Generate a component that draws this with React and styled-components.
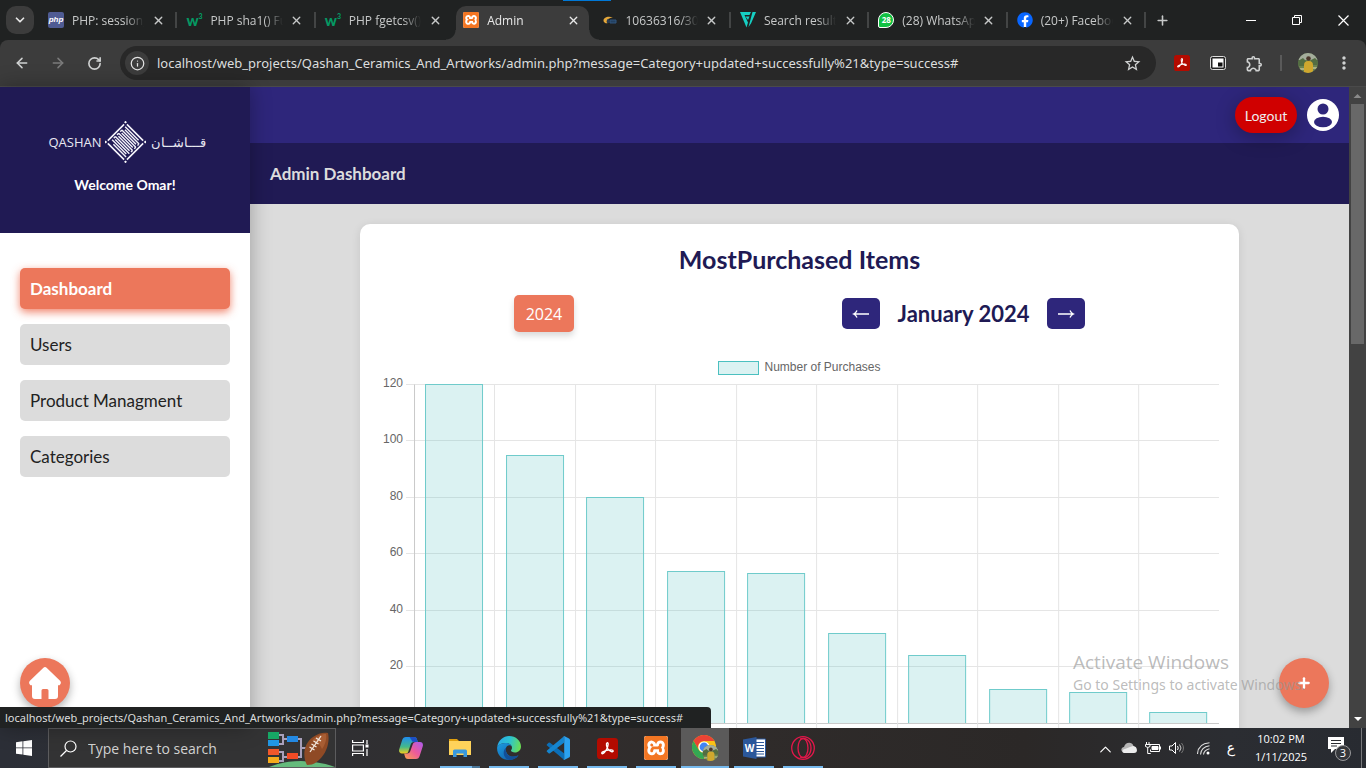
import React from "react";
import styled, { createGlobalStyle, css } from "styled-components";
import { SiXampp } from "react-icons/si";
import { FaFacebook } from "react-icons/fa";
import { MdStarBorder, MdOutlineExtension, MdMoreVert } from "react-icons/md";
import { ArrowLeft, ArrowRight, RotateCw, ChevronDown, ChevronUp, Plus, X, Info, Search } from "lucide-react";

const ui = '"Open Sans", "Noto Sans", sans-serif';
const uiWide = '"Noto Sans", "Open Sans", sans-serif';
const brand = 'Lato, "Open Sans", sans-serif';
const color = {
  navy: "#201a54",
  indigo: "#2e267b",
  coral: "#ec775b",
  grey: "#dcdcdc",
};

const Global = createGlobalStyle`
  *, *::before, *::after { box-sizing: border-box; }
  html, body { margin: 0; background: #202222; }
  button, input { font: inherit; }
  button { border: 0; padding: 0; background: none; color: inherit; }
  h1, h2, p, ul { margin: 0; padding: 0; }
  svg { display: block; flex: none; }
`;

const Desktop = styled.div`
  position: relative;
  display: flex;
  flex-direction: column;
  height: 100vh;
  overflow: hidden;
  font-family: ${ui};
`;

/* ---------- Browser tabs ---------- */
const TabBar = styled.header`
  position: relative;
  display: flex;
  align-items: stretch;
  height: 40px;
  flex: none;
  background: #202222;
  color: #c7c9c9;
`;
const TabSearch = styled.button`
  width: 28px;
  height: 28px;
  margin: 6px 5px 6px 6px;
  border-radius: 10px;
  background: #3c3c3c;
  color: #e6e6e6;
  display: grid;
  place-items: center;
`;
const Tabs = styled.div`
  display: flex;
  flex: 1;
  min-width: 0;
`;
const Tab = styled.div`
  position: relative;
  flex: 1;
  min-width: 0;
  display: flex;
  align-items: center;
  padding: 0 11px 0 9px;
  font-size: 12px;
  ${(p) =>
    p.$line &&
    css`
      &::after {
        content: "";
        position: absolute;
        right: 0;
        top: 12px;
        width: 2px;
        height: 16px;
        background: #434545;
      }
    `}
  ${(p) =>
    p.$active &&
    css`
      color: #e8e8e8;
      &::before {
        content: "";
        position: absolute;
        inset: 6px 4px 0 2px;
        border-radius: 10px 10px 0 0;
        background: #3c3c3c;
      }
      &::after {
        content: "";
        position: absolute;
        inset: 30px -6px 0 -8px;
        background:
          radial-gradient(circle at 0 0, transparent 9px, #3c3c3c 10px) left / 10px 10px no-repeat,
          radial-gradient(circle at 100% 0, transparent 9px, #3c3c3c 10px) right / 10px 10px no-repeat;
      }
      & > * {
        position: relative;
      }
    `}
`;
const TabTitle = styled.span`
  flex: 1;
  min-width: 0;
  margin: 0 6px 0 8px;
  overflow: hidden;
  white-space: nowrap;
  mask-image: linear-gradient(90deg, #000 75%, transparent 100%);
`;
const IconButton = styled.button`
  display: grid;
  place-items: center;
  flex: none;
  width: ${(p) => p.$w || 16}px;
  height: ${(p) => p.$h || 16}px;
  color: ${(p) => p.$color || "inherit"};
`;
const WindowButtons = styled.div`
  display: flex;
  margin-left: 50px;
  color: #fff;
`;
const LoadMark = styled.span`
  position: absolute;
  left: 563px;
  top: 0;
  width: 48px;
  height: 1px;
  background: #0078d7;
`;
const PhpIcon = styled.span`
  display: grid;
  place-items: center;
  flex: none;
  width: 16px;
  height: 16px;
  border-radius: 2px;
  background: #4f5b93;
  color: #fff;
  font: italic 700 8px/16px "Liberation Sans", sans-serif;
`;
const W3Icon = styled.span`
  display: flex;
  flex: none;
  width: 16px;
  color: #059862;
  font: 900 15px/16px Lato, sans-serif;
  sup {
    font-size: 7px;
    line-height: 8px;
  }
`;
const ChatIcon = styled.span`
  display: grid;
  place-items: center;
  flex: none;
  width: 16px;
  height: 16px;
  border: 1px solid #fff;
  border-radius: 8px 8px 8px 2px;
  background: #10c143;
  color: #fff;
  font: 700 8px/14px ${ui};
`;
const FacebookIcon = styled.span`
  flex: none;
  border-radius: 50%;
  background: radial-gradient(#fff 60%, transparent 61%);
  color: #0866ff;
`;

/* ---------- Address bar ---------- */
const Toolbar = styled.div`
  display: flex;
  align-items: center;
  height: 47px;
  flex: none;
  padding: 0 4px;
  background: #3c3c3c;
  border-bottom: 1px solid #4a4a4a;
  border-radius: 8px 8px 0 0;
  color: #d0d2d2;
`;
const AddressBox = styled.div`
  display: flex;
  align-items: center;
  flex: 1;
  height: 34px;
  margin: 0 8px;
  padding: 0 12px 0 5px;
  border-radius: 17px;
  background: #282828;
`;
const InfoButton = styled.button`
  display: grid;
  place-items: center;
  width: 24px;
  height: 24px;
  border-radius: 50%;
  background: #3c3c3c;
  color: #e3e3e3;
`;
const AddressInput = styled.input`
  flex: 1;
  min-width: 0;
  margin-left: 8px;
  padding: 0;
  border: 0;
  outline: 0;
  background: none;
  color: #dcdede;
  font-family: ${uiWide};
  font-size: 13px;
`;
const Divider = styled.span`
  width: 2px;
  height: 16px;
  margin: 0 8px;
  background: #5a5a5a;
`;

/* ---------- Page ---------- */
const Page = styled.div`
  display: flex;
  flex: 1;
  min-height: 0;
  position: relative;
  background: ${color.grey};
  font-family: ${brand};
`;
const Sidebar = styled.aside`
  position: relative;
  z-index: 1;
  display: flex;
  flex-direction: column;
  width: 250px;
  flex: none;
  background: #fff;
  box-shadow: 0 0 20px rgba(0, 0, 0, 0.3);
`;
const BrandBox = styled.div`
  display: flex;
  flex-direction: column;
  align-items: center;
  height: 146px;
  padding-top: 34px;
  background: ${color.navy};
  color: #fff;
`;
const LogoRow = styled.div`
  display: flex;
  align-items: center;
  justify-content: center;
  gap: 5px;
  color: #e9e8f2;
  font: 400 13px/20px ${ui};
`;
const LogoWord = styled.span`
  width: 51px;
  text-align: ${(p) => p.$align};
  white-space: nowrap;
`;
const Welcome = styled.p`
  margin-top: 12px;
  font-size: 14px;
  font-weight: 700;
  line-height: 20px;
`;
const NavList = styled.ul`
  flex: 1;
  display: flex;
  flex-direction: column;
  gap: 15px;
  padding: 35px 20px 0;
  list-style: none;
`;
const NavLink = styled.a`
  display: block;
  padding: 10px;
  border-radius: 5px;
  background: ${(p) => (p.$active ? color.coral : color.grey)};
  box-shadow: ${(p) => (p.$active ? "0 3px 8px rgba(236, 100, 70, 0.8)" : "none")};
  color: ${(p) => (p.$active ? "#fff" : "#222")};
  font-size: 17px;
  font-weight: ${(p) => (p.$active ? 700 : 400)};
  line-height: 21px;
  text-decoration: none;
`;
const RoundButton = styled.a`
  display: grid;
  place-items: center;
  width: 50px;
  height: 50px;
  border-radius: 50%;
  background: ${color.coral};
  box-shadow: 0 4px 8px rgba(0, 0, 0, 0.3);
  color: #fff;
`;
const HomeSlot = styled.div`
  padding: 20px;
`;
const FloatSlot = styled.div`
  position: absolute;
  right: 37px;
  bottom: 20px;
`;
const Main = styled.main`
  flex: 1;
  min-width: 0;
  overflow: hidden;
`;
const TopBar = styled.div`
  display: flex;
  justify-content: flex-end;
  align-items: center;
  gap: 10px;
  height: 56px;
  padding: 0 10px;
  background: ${color.indigo};
`;
const LogoutButton = styled.button`
  width: 62px;
  height: 36px;
  border-radius: 18px;
  background: #d00000;
  box-shadow: 0 4px 20px rgba(0, 0, 0, 0.3);
  color: #eee;
  font-size: 14px;
`;
const TitleBar = styled.div`
  height: 61px;
  padding: 20px;
  background: ${color.navy};
  color: #dcdcdc;
  h1 {
    font-size: 17px;
    font-weight: 700;
    line-height: 22px;
  }
`;
const Card = styled.section`
  width: 80%;
  margin: 20px auto;
  padding: 20px;
  border-radius: 10px;
  background: #fff;
  box-shadow: 0 2px 10px rgba(0, 0, 0, 0.1);
  color: ${color.navy};
`;
const CardTitle = styled.h2`
  margin-bottom: 20px;
  font-size: 25px;
  font-weight: 700;
  line-height: 31px;
  text-align: center;
`;
const Controls = styled.div`
  display: flex;
  justify-content: space-around;
  align-items: center;
  margin-bottom: 28px;
`;
const YearButton = styled.button`
  width: 60px;
  height: 37px;
  border-radius: 5px;
  background: ${color.coral};
  box-shadow: 0 4px 6px rgba(0, 0, 0, 0.15);
  color: #fff;
  font: 400 16px/20px "Open Sans", sans-serif;
`;
const MonthPicker = styled.div`
  display: flex;
  align-items: center;
`;
const MonthName = styled.span`
  width: 167px;
  text-align: center;
  white-space: nowrap;
  font-size: 22px;
  font-weight: 700;
  line-height: 26px;
`;
const ArrowButton = styled.button`
  display: grid;
  place-items: center;
  width: 38px;
  height: 31px;
  border-radius: 5px;
  background: ${color.indigo};
  color: #fff;
`;
const Legend = styled.div`
  display: flex;
  justify-content: center;
  align-items: flex-start;
  gap: 5px;
  height: 15px;
  color: #666;
  font: 400 12px/14px "Liberation Sans", Arial, sans-serif;
`;
const Swatch = styled.span`
  width: 41px;
  height: 14px;
  margin-top: 1px;
  border: 1px solid #4bc0c0;
  background: rgba(75, 192, 192, 0.2);
`;
const Chart = styled.svg`
  width: 100%;
  height: auto;
  text {
    fill: #666;
    font: 400 12px "Liberation Sans", Arial, sans-serif;
    text-anchor: end;
  }
`;
const ScrollTrack = styled.div`
  display: flex;
  flex-direction: column;
  justify-content: space-between;
  align-items: center;
  width: 17px;
  flex: none;
  background: #424242;
`;
const ScrollThumb = styled.div`
  width: 13px;
  height: 240px;
  background: #686868;
`;
const ScrollTop = styled.div`
  display: flex;
  flex-direction: column;
  align-items: center;
`;
const StatusBubble = styled.div`
  position: absolute;
  z-index: 2;
  left: 0;
  bottom: 0;
  width: 711px;
  height: 21px;
  padding-left: 5px;
  border-radius: 0 4px 0 0;
  background: #202222;
  color: #dcdede;
  font: 400 11px/21px ${uiWide};
  white-space: nowrap;
`;
const Watermark = styled.div`
  position: absolute;
  left: 1073px;
  bottom: 33px;
  color: rgba(150, 150, 150, 0.65);
  font-family: ${ui};
  white-space: nowrap;
  pointer-events: none;
`;
const WatermarkTitle = styled.p`
  font-size: 19px;
  line-height: 26px;
`;
const WatermarkText = styled.p`
  font-family: ${uiWide};
  font-size: 14px;
  line-height: 20px;
`;

/* ---------- Taskbar ---------- */
const Taskbar = styled.footer`
  display: flex;
  align-items: stretch;
  height: 40px;
  flex: none;
  background: linear-gradient(90deg, #2c2f37 0%, #302f31 30%, #302c2b 50%, #2b2827 75%, #2b2d32 90%, #282b31 100%);
  color: #fff;
`;
const SearchBox = styled.label`
  display: flex;
  align-items: center;
  width: 288px;
  padding-left: 11px;
  border: 1px solid #5c5c5e;
  background: #333334;
  input {
    flex: 1;
    min-width: 0;
    margin-left: 11px;
    padding: 0;
    border: 0;
    outline: 0;
    background: none;
    font-size: 14px;
  }
  input::placeholder {
    color: #d2d2d2;
    opacity: 1;
  }
`;
const TaskApps = styled.div`
  display: flex;
  gap: 1px;
  flex: 1;
  margin-left: 3px;
`;
const TaskApp = styled.button`
  position: relative;
  display: grid;
  place-items: center;
  width: 48px;
  background: ${(p) => (p.$active ? "#5b5a5a" : "none")};
  ${(p) =>
    p.$open &&
    css`
      &::after {
        content: "";
        position: absolute;
        inset: auto ${p.$active ? 0 : 4}px 0;
        height: 2px;
        background: ${p.$multi ? "linear-gradient(90deg, #76b9ed 80%, #4a7698 80%)" : "#76b9ed"};
      }
    `}
`;
const Tray = styled.div`
  display: flex;
  align-items: center;
`;
const Clock = styled.div`
  width: 72px;
  text-align: center;
  font-size: 11px;
  line-height: 18px;
`;
const Language = styled.span`
  width: 28px;
  text-align: center;
  font: 400 14px/20px "DejaVu Sans", sans-serif;
`;
const Notice = styled.button`
  width: 44px;
  height: 40px;
  display: grid;
  place-items: center;
`;
const DesktopEdge = styled.span`
  align-self: stretch;
  width: 5px;
  border-left: 1px solid #77787b;
`;

const URL_TEXT =
  "localhost/web_projects/Qashan_Ceramics_And_Artworks/admin.php?message=Category+updated+successfully%21&type=success#";

const XamppBox = styled.span`
  display: grid;
  place-items: center;
  flex: none;
  width: ${(p) => p.$size}px;
  height: ${(p) => p.$size}px;
  border-radius: 2px;
  background: #fff;
  color: #f37623;
`;
const XamppIcon = ({ size }) => (
  <XamppBox $size={size}>
    <SiXampp size={size} />
  </XamppBox>
);

const AcrobatIcon = ({ size }) => (
  <svg width={size} height={size} viewBox="0 0 22 22">
    <rect width="22" height="22" rx="3.500" fill="#b30b00" />
    <path
      d="M10.500 5c1.800-.6 1.400 3-.2 6.200C8.800 14.400 6.500 17 5.300 16.400c-1.400-.9 1.700-2.800 5-3.500 3.200-.7 6.700-.6 6.700.8 0 1.500-3.300.3-5.200-1.700C10 10.200 9.200 5.600 10.500 5z"
      fill="none"
      stroke="#fff"
      strokeWidth="1.400"
    />
  </svg>
);

const Avatar = ({ size }) => (
  <svg width={size} height={size} viewBox="0 0 20 20">
    <clipPath id={`face${size}`}>
      <circle cx="10" cy="10" r="10" />
    </clipPath>
    <g clipPath={`url(#face${size})`}>
      <rect width="20" height="20" fill="#6b8452" />
      <rect width="20" height="7" fill="#a4ad9c" />
      <path d="M0 8l5-3 3 3v5H0zM13 7l4-2 3 3v4h-7z" fill="#536d42" />
      <path d="M6 20V12q0-4 4.500-4T15 12v6l-2 2z" fill="#cfa72e" />
      <circle cx="10.500" cy="5.500" r="2.300" fill="#4c372b" />
      <path d="M0 15h6v2H0zM15 14h5v2h-5z" fill="#aab183" />
    </g>
  </svg>
);

const ChromeIcon = () => (
  <svg width="27" height="26" viewBox="0 0 27 26">
    <circle cx="12" cy="12" r="12" fill="#fbc116" />
    <path d="M1.600 6a12 12 0 0 1 20.800 0H12a6 6 0 0 0-5.200 9z" fill="#ea4335" />
    <path d="M1.600 6l5.200 9a6 6 0 0 0 7 2.700L12 24A12 12 0 0 1 1.600 6z" fill="#34a853" />
    <circle cx="12" cy="12" r="5.600" fill="#fff" />
    <circle cx="12" cy="12" r="4.400" fill="#4285f4" />
    <g transform="translate(10.500 10)">
      <Avatar size={16} />
    </g>
  </svg>
);

const CodeIcon = () => (
  <svg width="24" height="24" viewBox="0 0 24 24">
    <path d="M1 8.200L2.600 6.700q.7-.5 1.400 0L18 17.300V23.800L1 9.600q-.8-.7 0-1.400z" fill="#0b6fb8" />
    <path d="M1 15.800l1.600 1.500q.7.500 1.400 0L18 6.700V.2L1 14.400q-.8.700 0 1.400z" fill="#1585cf" />
    <path d="M17.200.3q.6-.5 1.400-.1L23 2.400q1 .5 1 1.500v16.200q0 1-1 1.500l-4.400 2.200q-.8.400-1.400-.1 1 .3 1-1V1.300q0-1.300-1-1z" fill="#2ba2f0" />
  </svg>
);

const EdgeIcon = () => (
  <svg width="24" height="24" viewBox="0 0 24 24">
    <defs>
      <linearGradient id="edgeTop" x1="0" x2="1" y1=".3" y2=".5">
        <stop offset="0" stopColor="#2aa9e8" />
        <stop offset=".5" stopColor="#2bc3d2" />
        <stop offset="1" stopColor="#6ade55" />
      </linearGradient>
      <linearGradient id="edgeLow" x1="0" x2="1" y1="0" y2="1">
        <stop offset="0" stopColor="#1b9de2" />
        <stop offset="1" stopColor="#10539f" />
      </linearGradient>
    </defs>
    <path d="M.2 11C1.300 4 6.500 0 12 0c7 0 12 5 12 10.500 0 3.500-2.700 6-6 6-2.600 0-4.200-1-4-1.800.2-.8 1-1.300 1-2.900C15 9 12.200 7 8.800 7 5 7 1.700 8.300.2 11z" fill="url(#edgeTop)" />
    <path d="M.2 11C1.700 8 5 7 8.800 7c2.800 0 5 1.200 5.800 3-1-.7-2.200-.8-3.200-.4C8.400 10.600 8 14 9.700 17c2 3.500 6.500 4.700 11.800 2.300C19.300 22.600 16 24 12.200 24 4.700 24-.6 18.400.2 11z" fill="url(#edgeLow)" />
    <path d="M9.500 11.500C8 14 9 17.500 11.600 19.500c2.500 1.800 6.300 1.600 9.900-.2-2.200 3.300-5.500 4.700-9.300 4.700C6.500 23 4.600 14.500 9.500 11.500z" fill="#124f98" />
  </svg>
);

const CopilotIcon = () => (
  <svg width="24" height="22" viewBox="0 0 24 22">
    <defs>
      <linearGradient id="cpA" x1="0" x2="0" y1="0" y2="1">
        <stop offset="0" stopColor="#1f8df0" />
        <stop offset=".6" stopColor="#44b989" />
        <stop offset="1" stopColor="#f3cf1c" />
      </linearGradient>
      <linearGradient id="cpB" x1="1" x2="0" y1="0" y2="1">
        <stop offset="0" stopColor="#a95bf0" />
        <stop offset=".5" stopColor="#ee5a9b" />
        <stop offset="1" stopColor="#fba44b" />
      </linearGradient>
    </defs>
    <path d="M7 0h8c2 0 2.700 1.200 3.200 3l.6 2H15c-2 0-3 1-3.500 3L9.500 14c-.5 1.800-1.300 2.500-3 2.500H3C.5 16.500-.5 14.500.3 12L3.200 3C3.900 1 5 0 7 0z" fill="url(#cpA)" />
    <path d="M17 22H9c-2 0-2.700-1.200-3.200-3l-.7-2.500H8c2 0 3-1 3.500-3L13.500 8c.5-2 1.500-3 3.500-3h4c2.500 0 3.500 2 2.700 4.500l-2.900 9C20.100 21 19 22 17 22z" fill="url(#cpB)" />
    <path d="M10.500 0H15c2 0 2.700 1.200 3.200 3l.6 2H15c-1.500 0-2.200-.8-2.600-2.200z" fill="#1d4fc4" />
  </svg>
);

const ExplorerIcon = () => (
  <svg width="22" height="18" viewBox="0 0 22 18">
    <path d="M0 0h8l2 2v3H0z" fill="#e0a00e" />
    <path d="M0 2h22v14H0V3z" fill="#ffd35a" />
    <path d="M4 18v-6q0-1.500 1.500-1.500h11Q18 10.500 18 12v6h-3.500v-3.500h-7V18z" fill="#3a99dd" />
  </svg>
);

const WordIcon = () => (
  <svg width="23" height="22" viewBox="0 0 23 22">
    <path d="M12 2h10.500v18H12z" fill="#fff" stroke="#2b579a" />
    <path d="M13 5.500h8M13 8.500h8M13 11.500h8M13 14.500h8M13 17h8" stroke="#2b579a" strokeWidth="1.200" />
    <path d="M0 2.500L13.500 0v22L0 19.500z" fill="#2b579a" />
    <text x="6.600" y="15" fill="#fff" fontSize="10" fontWeight="700" textAnchor="middle" fontFamily="Open Sans, sans-serif">
      W
    </text>
  </svg>
);

const OperaIcon = () => (
  <svg width="24" height="24" viewBox="0 0 24 24" fill="none" stroke="#e3174a" strokeWidth="1.300">
    <circle cx="12" cy="12" r="11.300" />
    <ellipse cx="12" cy="12" rx="5" ry="9.500" />
    <path d="M9 3.200C15 .2 20 5.500 20 12s-5 11.800-11 8.800" />
  </svg>
);

const QashanMark = () => (
  <svg width="41" height="42" viewBox="0 0 41 42">
    <g transform="translate(20.500 21) rotate(45)" stroke="#f4f3fa" fill="none">
      <path d="M-11.500-13.500h23M-11.500 13.500h23M-13.500-11.500v23M13.500-11.500v23" strokeWidth="1.600" />
      <path
        d="M-11-10.500H8M-9-8.200H11M-11-5.900H9M-9-3.600H11M-11-1.300H9M-9 1H11M-11 3.300H9M-9 5.600H11M-11 7.900H9M-7 10.200H11M-11-5.900v2.300M11-8.200v2.300M-11-1.300V1M11-3.600v2.300M-11 3.300v2.300M11 1v2.300"
        strokeWidth="1.400"
      />
      <g fill="#fff" stroke="none">
        <rect x="-15" y="-15" width="2" height="2" />
        <rect x="13" y="-15" width="2" height="2" />
        <rect x="-15" y="13" width="2" height="2" />
        <rect x="13" y="13" width="2" height="2" />
      </g>
    </g>
  </svg>
);

const SearchArt = () => (
  <svg width="68" height="38" viewBox="0 0 68 38">
    <path d="M2 38q14-6 32-6 22 1 34 6z" fill="#65bb7c" />
    <g fill="none" stroke="#a9a0bb" strokeWidth="2">
      <path d="M12 6h4v9h-4M16 10h4M12 23h4v9h-4M16 28h4M31 10h3v18h-3M34 19h6" />
    </g>
    <rect x="1" y="3" width="11" height="7" fill="#16a765" />
    <rect x="1" y="11" width="11" height="6" fill="#2196e3" />
    <rect x="1" y="20" width="11" height="6" fill="#f2572a" />
    <rect x="1" y="28" width="11" height="6" fill="#f5ab1c" />
    <rect x="20" y="7" width="11" height="6" fill="#2389e3" />
    <rect x="20" y="24" width="11" height="6" fill="#f04b25" />
    <path d="M40 36c-5-9-3-22 6-28 5-4 11-5 15-4 2 8-1 20-9 27-4 4-8 5-12 5z" fill="#8f4a25" />
    <path d="M45 12c4-5 9-7 14-7 1 5-1 11-4 15-2-5-5-8-10-8z" fill="#a85d33" />
    <path d="M43 23L54 7M42.500 18l5 3M44.500 15l5 3M46.500 12l5 3M49 9l5 3" stroke="#f3e9e0" strokeWidth="1.300" fill="none" />
  </svg>
);

const tabs = [
  { title: "PHP: session_start", line: true, icon: <PhpIcon>php</PhpIcon> },
  { title: "PHP sha1() Function", line: true, icon: <W3Icon>w<sup>3</sup></W3Icon> },
  { title: "PHP fgetcsv() Function", icon: <W3Icon>w<sup>3</sup></W3Icon> },
  { title: "Admin", active: true, icon: <XamppIcon size={16} /> },
  {
    title: "10636316/30112",
    line: true,
    icon: (
      <svg width="16" height="16" viewBox="0 0 16 16">
        <path d="M11 5.500C6 3.500 1.500 5.500 1.500 8.500c0 2 2 3 4 2.800C3.500 9 5 6.200 11 5.500z" fill="#e5a83b" />
        <path d="M6 7v4M8 8h6v3H8z" stroke="#31557e" fill="#23405f" />
      </svg>
    ),
  },
  {
    title: "Search results",
    line: true,
    icon: (
      <svg width="16" height="16" viewBox="0 0 16 16" fill="#16cfc3">
        <path d="M0 0h11L9.500 3h-5L8 10.500 6.500 15.500zM12.500 0H16l-5 11.500L8.500 15z" />
        <path d="M5.500 4.500h4L8 8z" />
      </svg>
    ),
  },
  { title: "(28) WhatsApp", line: true, icon: <ChatIcon>28</ChatIcon> },
  { title: "(20+) Facebook", line: true, icon: <FacebookIcon><FaFacebook size={16} /></FacebookIcon> },
];

const navItems = ["Dashboard", "Users", "Product Managment", "Categories"];
const purchases = [120, 95, 80, 54, 53, 32, 24, 12, 11, 4];

function PurchasesChart() {
  const left = 34.4;
  const top = 9.4;
  const bottom = 348;
  const column = 80.45;
  const y = (v) => bottom - (v / 120) * (bottom - top);
  return (
    <Chart viewBox="0 0 839 390" role="img" aria-label="Number of purchases per item">
      {[120, 100, 80, 60, 40, 20, 0].map((v) => {
        const line = Math.floor(y(v)) + 0.5;
        return (
          <g key={v}>
            <line x1="26" x2="839" y1={line} y2={line} stroke={v ? "#e5e5e5" : "#cacaca"} />
            {v > 0 && <text x="23" y={line + 2.5}>{v}</text>}
          </g>
        );
      })}
      {purchases.map((v, i) => {
        const x = Math.floor(left + column * i) + 0.5;
        const bar = Math.round(left + column * i + 11);
        return (
          <g key={i}>
            <line x1={x} x2={x} y1={top} y2={bottom + 8} stroke={i ? "#e5e5e5" : "#cacaca"} />
            <path
              d={`M${bar + 0.5} ${bottom}V${Math.round(y(v)) + 0.5}h57V${bottom}`}
              fill="rgba(75,192,192,0.2)"
              stroke="#6fcbcb"
            />
          </g>
        );
      })}
    </Chart>
  );
}

export default function App() {
  return (
    <Desktop>
      <Global />
      <TabBar>
        <LoadMark />
        <TabSearch aria-label="Search tabs"><ChevronDown size={14} strokeWidth={3} /></TabSearch>
        <Tabs>
          {tabs.map((t) => (
            <Tab key={t.title} $active={t.active} $line={t.line}>
              {t.icon}
              <TabTitle>{t.title}</TabTitle>
              <IconButton aria-label="Close tab"><X size={13} strokeWidth={2.5} /></IconButton>
            </Tab>
          ))}
        </Tabs>
        <IconButton $w={32} $h={40} aria-label="New tab"><Plus size={15} strokeWidth={2.5} /></IconButton>
        <WindowButtons>
          <IconButton $w={46} $h={40} aria-label="Minimize">
            <svg width="10" height="10"><path d="M0 5.500h10" stroke="#fff" /></svg>
          </IconButton>
          <IconButton $w={46} $h={40} aria-label="Restore">
            <svg width="10" height="10" fill="none" stroke="#fff"><path d="M.5 2.500h7v7h-7zM2.500 2.500v-2h7v7h-2" /></svg>
          </IconButton>
          <IconButton $w={46} $h={40} aria-label="Close">
            <svg width="11" height="11"><path d="M.5.500l10 10M10.500.500l-10 10" stroke="#fff" strokeWidth="1.200" /></svg>
          </IconButton>
        </WindowButtons>
      </TabBar>

      <Toolbar>
        <IconButton $w={36} $h={36} aria-label="Back"><ArrowLeft size={16} strokeWidth={2.300} /></IconButton>
        <IconButton $w={36} $h={36} $color="#7b7b7b" aria-label="Forward"><ArrowRight size={16} strokeWidth={2.300} /></IconButton>
        <IconButton $w={36} $h={36} aria-label="Reload"><RotateCw size={15} strokeWidth={2.600} /></IconButton>
        <AddressBox>
          <InfoButton aria-label="Site information"><Info size={15} /></InfoButton>
          <AddressInput aria-label="Address" defaultValue={URL_TEXT} />
          <IconButton $w={24} $h={24} aria-label="Bookmark"><MdStarBorder size={19} /></IconButton>
        </AddressBox>
        <IconButton $w={36} $h={36} aria-label="Acrobat"><AcrobatIcon size={16} /></IconButton>
        <IconButton $w={36} $h={36} aria-label="Picture in picture">
          <svg width="16" height="16" viewBox="0 0 16 16">
            <rect x=".500" y="1.500" width="15" height="13" rx="2" fill="#222" stroke="#ddd" />
            <rect x="2.500" y="3.500" width="11" height="9" fill="#fff" />
            <rect x="8" y="7.500" width="4.500" height="4" fill="#111" />
          </svg>
        </IconButton>
        <IconButton $w={36} $h={36} aria-label="Extensions"><MdOutlineExtension size={19} /></IconButton>
        <Divider />
        <IconButton $w={36} $h={36} aria-label="Profile"><Avatar size={20} /></IconButton>
        <IconButton $w={36} $h={36} aria-label="Menu"><MdMoreVert size={20} /></IconButton>
      </Toolbar>

      <Page>
        <Sidebar>
          <BrandBox>
            <LogoRow>
              <LogoWord $align="right">QASHAN</LogoWord>
              <QashanMark />
              <LogoWord $align="left" lang="ar">قـــاشــان</LogoWord>
            </LogoRow>
            <Welcome>Welcome Omar!</Welcome>
          </BrandBox>
          <NavList>
            {navItems.map((n, i) => (
              <li key={n}><NavLink href="#" $active={i === 0}>{n}</NavLink></li>
            ))}
          </NavList>
          <HomeSlot>
            <RoundButton href="#" aria-label="Home">
              <svg width="32" height="32" viewBox="0 0 32 32" fill="currentColor">
                <path d="M14.400.700q1.600-1.300 3.200 0L31.300 14q1.500 2.500-.8 4.300H29V29q0 3-3 3h-6.500v-8.500q0-1.500-1.500-1.500h-4q-1.500 0-1.500 1.500V32H6q-3 0-3-3V18.300H1.500Q-.8 16.500.7 14z" />
              </svg>
            </RoundButton>
          </HomeSlot>
        </Sidebar>
        <Main>
          <TopBar>
            <LogoutButton>Logout</LogoutButton>
            <svg width="32" height="32" viewBox="0 0 32 32">
              <circle cx="16" cy="16" r="16" fill="#fff" />
              <circle cx="16" cy="10" r="5.500" fill={color.indigo} />
              <ellipse cx="16" cy="23" rx="9" ry="5.300" fill={color.indigo} />
            </svg>
          </TopBar>
          <TitleBar><h1>Admin Dashboard</h1></TitleBar>
          <Card>
            <CardTitle>MostPurchased Items</CardTitle>
            <Controls>
              <YearButton>2024</YearButton>
              <MonthPicker>
                <ArrowButton aria-label="Previous month">
                  <svg width="18" height="10" viewBox="0 0 18 10" fill="none" stroke="#fff" strokeWidth="1.300"><path d="M17 5H1.500M5 1.500Q4 4 1.500 5 4 6 5 8.500" /></svg>
                </ArrowButton>
                <MonthName>January 2024</MonthName>
                <ArrowButton aria-label="Next month">
                  <svg width="18" height="10" viewBox="0 0 18 10" fill="none" stroke="#fff" strokeWidth="1.300"><path d="M1 5h15.500M13 1.500Q14 4 16.500 5 14 6 13 8.500" /></svg>
                </ArrowButton>
              </MonthPicker>
            </Controls>
            <Legend><Swatch />Number of Purchases</Legend>
            <PurchasesChart />
          </Card>
        </Main>
        <ScrollTrack>
          <ScrollTop>
            <svg width="17" height="17"><path d="M4.500 11l4-4 4 4z" fill="#8a8a8a" /></svg>
            <ScrollThumb />
          </ScrollTop>
          <svg width="17" height="17"><path d="M5 6l4 4 4-4z" fill="#fff" /></svg>
        </ScrollTrack>
        <FloatSlot>
          <RoundButton href="#" aria-label="Add"><Plus size={16} strokeWidth={3.500} /></RoundButton>
        </FloatSlot>
        <Watermark>
          <WatermarkTitle>Activate Windows</WatermarkTitle>
          <WatermarkText>Go to Settings to activate Windows.</WatermarkText>
        </Watermark>
        <StatusBubble>{URL_TEXT}</StatusBubble>
      </Page>

      <Taskbar>
        <IconButton $w={48} $h={40} aria-label="Start">
          <svg width="16" height="16" fill="#fff"><path d="M0 2.200l6.500-.9v6.200H0zM7.300 1.200L16 0v7.500H7.300zM0 8.300h6.500v6.300L0 13.700zM7.300 8.300H16V16l-8.700-1.200z" /></svg>
        </IconButton>
        <SearchBox>
          <svg width="17" height="17" viewBox="0 0 17 17" fill="none" stroke="#fff" strokeWidth="1.200"><circle cx="10.500" cy="6.500" r="5.500" /><path d="M6.500 10.500L.500 16.500" /></svg>
          <input placeholder="Type here to search" aria-label="Type here to search" />
          <SearchArt />
        </SearchBox>
        <IconButton $w={48} $h={40} aria-label="Task view">
          <svg width="17" height="16" fill="none" stroke="#fff" strokeWidth="1.200">
            <path d="M.600 0v2.500h10.800V0M.600 5h10.800v6H.600zM.600 16v-2.500h10.800V16M15 0v4M15 9v7" />
            <path d="M13.500 4.500h3v3h-3z" fill="#fff" stroke="none" />
          </svg>
        </IconButton>
        <TaskApps>
          <TaskApp aria-label="Copilot"><CopilotIcon /></TaskApp>
          <TaskApp $open $multi aria-label="File Explorer"><ExplorerIcon /></TaskApp>
          <TaskApp $open aria-label="Edge"><EdgeIcon /></TaskApp>
          <TaskApp $open aria-label="Visual Studio Code"><CodeIcon /></TaskApp>
          <TaskApp $open aria-label="Acrobat"><AcrobatIcon size={21} /></TaskApp>
          <TaskApp $open aria-label="XAMPP"><XamppIcon size={24} /></TaskApp>
          <TaskApp $open $active aria-label="Chrome"><ChromeIcon /></TaskApp>
          <TaskApp $open aria-label="Word"><WordIcon /></TaskApp>
          <TaskApp $open aria-label="Opera"><OperaIcon /></TaskApp>
        </TaskApps>
        <Tray>
          <IconButton $w={24} aria-label="Hidden icons"><ChevronUp size={19} strokeWidth={1.500} /></IconButton>
          <IconButton $w={24} aria-label="OneDrive">
            <svg width="17" height="12" viewBox="0 0 17 12"><path d="M3 10C-1 10 0 5 3 5c1-5 8-6 9.500-1L8 10z" fill="#b5b5b5" /><path d="M4 11c-4 0-3-4 0-4L9 5l3-1c4-.5 6 7 1 7z" fill="#ececec" /></svg>
          </IconButton>
          <IconButton $w={24} aria-label="Battery">
            <svg width="17" height="12" viewBox="0 0 17 12" fill="none" stroke="#fff"><path d="M5 2.500h9.500v7h-9v-2M15.500 4.500v3M1.500 0v2M4 0v2M.500 2.500h4.500v2q-2 2-4.500 0zM2.700 5.500v6h3" /><path d="M7 4.500h6v3H7z" fill="#fff" /></svg>
          </IconButton>
          <IconButton $w={24} aria-label="Volume">
            <svg width="17" height="14" viewBox="0 0 17 14" fill="none" stroke="#fff"><path d="M.500 5v4h2.500l3.500 3.500v-11L3 5zM8.500 5q1.500 2 0 4" /><path d="M10.500 3.500q3 3.500 0 7" stroke="#ccc" /><path d="M12.500 2q4 5 0 10" stroke="#777" /></svg>
          </IconButton>
          <IconButton $w={28} aria-label="Wi-Fi">
            <svg width="13" height="13" viewBox="0 0 13 13" fill="none" stroke="#ddd" strokeWidth="1.100"><path d="M.500 12Q1 1.500 12.500.700M3.500 12.500Q4 5 12.500 3.700M6.500 12.500q.5-4.500 6-5.800" /><circle cx="11" cy="11" r="1.500" fill="#fff" stroke="none" /></svg>
          </IconButton>
          <Language>ع</Language>
          <Clock><div>10:02 PM</div><div>1/11/2025</div></Clock>
          <Notice aria-label="Notifications">
            <svg width="26" height="26" viewBox="0 0 26 26">
              <path d="M2 2h16v12H9l-4 4v-4H2z" fill="#fff" />
              <path d="M5 5.500h10M5 8.500h10M5 11h6" stroke="#2b2d32" />
              <circle cx="17" cy="18" r="7.500" fill="#35373b" stroke="#99999b" />
              <text x="17" y="22" fill="#fff" fontSize="11" textAnchor="middle" fontFamily="Open Sans, sans-serif">3</text>
            </svg>
          </Notice>
          <DesktopEdge />
        </Tray>
      </Taskbar>
    </Desktop>
  );
}
